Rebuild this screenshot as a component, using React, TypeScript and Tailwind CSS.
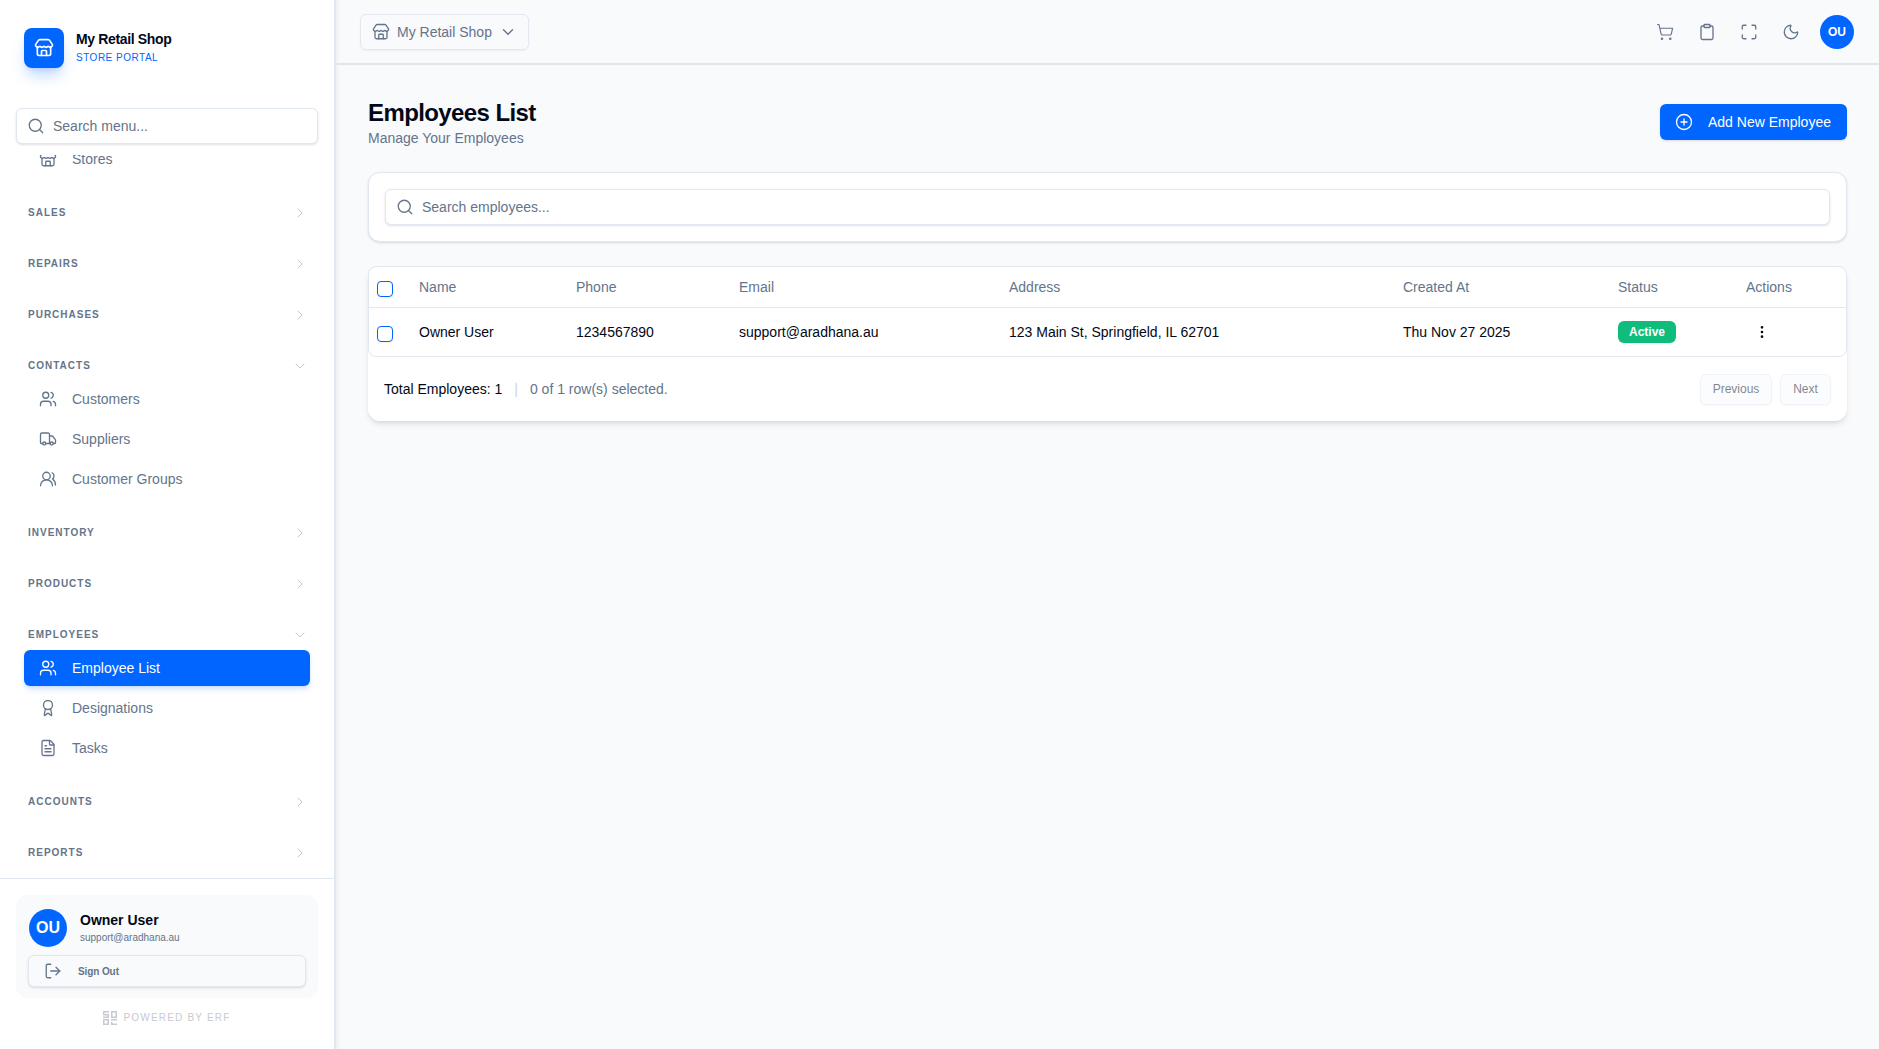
import React from "react";
import {
  Store, Search, ChevronRight, ChevronDown, Users, Truck, UsersRound, Award, FileText,
  LogOut, ShoppingCart, Clipboard, Maximize, Moon, CirclePlus, MoreVertical,
} from "lucide-react";

function Heading({ label, open }: { label: string; open?: boolean }) {
  return (
    <div className="flex h-[31px] items-center justify-between pl-1 pr-[2px]">
      <span className="text-[10px] font-bold uppercase tracking-widest text-[#64748b]">{label}</span>
      {open ? (
        <ChevronDown className="h-4 w-4 text-[#c2c8d2]" strokeWidth={1.5} />
      ) : (
        <ChevronRight className="h-4 w-4 text-[#c2c8d2]" strokeWidth={1.5} />
      )}
    </div>
  );
}

function Item({ icon: Icon, label, active }: { icon: React.ElementType; label: string; active?: boolean }) {
  return (
    <div
      className={
        active
          ? "flex h-9 items-center gap-[15px] rounded-md bg-[#0066ff] px-[15px] text-sm text-white shadow-md shadow-blue-500/20"
          : "flex h-9 items-center gap-[15px] rounded-md px-[15px] text-sm text-[#64748b]"
      }
    >
      <Icon className="h-[18px] w-[18px] shrink-0" strokeWidth={1.75} />
      <span>{label}</span>
    </div>
  );
}

function Section({ label, items }: { label: string; items?: { icon: React.ElementType; label: string; active?: boolean }[] }) {
  return (
    <div className="mb-5">
      <Heading label={label} open={!!items} />
      {items && (
        <div className="flex flex-col gap-1">
          {items.map((i) => (
            <Item key={i.label} {...i} />
          ))}
        </div>
      )}
    </div>
  );
}

function Sidebar() {
  return (
    <aside className="relative z-10 flex h-full w-[336px] shrink-0 flex-col border-r-2 border-[#e2e8f0] bg-white shadow-[2px_0_2px_rgba(226,232,240,0.5)]">
      <div className="flex h-[108px] shrink-0 items-start gap-3 px-6 pt-7">
        <div className="flex h-10 w-10 items-center justify-center rounded-lg bg-[#0066ff] text-white shadow-lg shadow-blue-500/30">
          <Store className="h-5 w-5" />
        </div>
        <div className="flex flex-col">
          <span className="text-sm font-bold leading-[22px] tracking-tight text-[#020817]">My Retail Shop</span>
          <span className="mt-px text-[10px] leading-[14px] tracking-[0.05em] text-[#0066ff]">STORE PORTAL</span>
        </div>
      </div>
      <div className="h-[47px] shrink-0 px-4">
        <div className="flex h-9 items-center gap-2 rounded-md border border-[#e2e8f0] bg-white pl-[10px] shadow-sm">
          <Search className="h-[18px] w-[18px] text-[#64748b]" strokeWidth={1.75} />
          <span className="text-sm text-[#64748b]">Search menu...</span>
        </div>
      </div>
      <nav className="min-h-0 flex-1 overflow-hidden px-6">
        <div className="-mt-[14px]">
          <div className="mb-5">
            <Item icon={Store} label="Stores" />
          </div>
          <Section label="Sales" />
          <Section label="Repairs" />
          <Section label="Purchases" />
          <Section
            label="Contacts"
            items={[
              { icon: Users, label: "Customers" },
              { icon: Truck, label: "Suppliers" },
              { icon: UsersRound, label: "Customer Groups" },
            ]}
          />
          <Section label="Inventory" />
          <Section label="Products" />
          <Section
            label="Employees"
            items={[
              { icon: Users, label: "Employee List", active: true },
              { icon: Award, label: "Designations" },
              { icon: FileText, label: "Tasks" },
            ]}
          />
          <Section label="Accounts" />
          <Section label="Reports" />
        </div>
      </nav>
      <div className="h-[171px] shrink-0 border-t border-[#e2e8f0] px-4 pt-4">
        <div className="rounded-xl bg-[#f8fafc] px-3 pb-[11px] pt-[14px]">
          <div className="flex items-start gap-[13px] pl-px">
            <div className="flex h-[38px] w-[38px] items-center justify-center rounded-full bg-[#0066ff] text-base font-bold text-white">
              OU
            </div>
            <div className="flex flex-col pt-px">
              <span className="text-sm font-bold leading-5 text-[#020817]">Owner User</span>
              <span className="text-[10px] leading-4 text-[#64748b]">support@aradhana.au</span>
            </div>
          </div>
          <div className="mt-[8px] flex h-8 items-center gap-4 rounded-md border border-[#e2e8f0] bg-[#f8fafc] pl-[15px] shadow-sm">
            <LogOut className="h-[18px] w-[18px] text-[#64748b]" strokeWidth={1.75} />
            <span className="text-[10px] font-bold tracking-[-0.01em] text-[#64748b]">Sign Out</span>
          </div>
        </div>
        <div className="mt-3 flex items-center justify-center gap-[6px]">
          <svg viewBox="0 0 14 14" className="h-[14px] w-[14px] text-[#c6cad2]" fill="currentColor">
            <path d="M0 0h6v1.500H1.500V3H6v4H0V5.500h4.500V4.500H0zM8 0h6v7H8zM9.500 1.500v4h3v-4zM0 8h6v6H0zM1.500 9.500v3h3v-3zM8 8h6v1.500H8zM8 11h1.500v1.500H14V14H8z" fillRule="evenodd" />
          </svg>
          <span className="text-[10px] tracking-[0.12em] text-[#c6cad2]">POWERED BY ERF</span>
        </div>
      </div>
    </aside>
  );
}

function Header() {
  return (
    <header className="flex h-[65px] shrink-0 items-center justify-between border-b-2 border-[#e2e4ea] bg-[#f9fafc] pl-6 pr-[25px]">
      <div className="flex h-9 w-[169px] items-center gap-[7px] rounded-md border border-[#e2e8f0] pl-[11px] text-sm text-[#64748b] shadow-xs">
        <Store className="h-[18px] w-[18px]" strokeWidth={1.75} />
        <span>My Retail Shop</span>
        <ChevronDown className="h-[18px] w-[18px]" strokeWidth={1.75} />
      </div>
      <div className="flex items-center text-[#64748b]">
        <div className="flex w-[42px] justify-center"><ShoppingCart className="h-[18px] w-[18px]" strokeWidth={1.5} /></div>
        <div className="flex w-[42px] justify-center"><Clipboard className="h-[18px] w-[18px]" strokeWidth={1.75} /></div>
        <div className="flex w-[42px] justify-center"><Maximize className="h-[18px] w-[18px]" strokeWidth={1.75} /></div>
        <div className="flex w-[42px] justify-center"><Moon className="h-[18px] w-[18px]" strokeWidth={1.75} /></div>
        <div className="ml-[8px] flex h-[34px] w-[34px] items-center justify-center rounded-full bg-[#0066ff] text-xs font-bold text-white">
          OU
        </div>
      </div>
    </header>
  );
}

const th = "h-10 px-0 text-left text-sm font-normal text-[#64748b]";
const td = "h-[49px] px-0 text-sm text-[#020817]";

function Check() {
  return <div className="h-4 w-4 translate-y-[2px] rounded border border-[#0066ff] bg-white shadow-xs" />;
}

function Main() {
  return (
    <main className="min-h-0 flex-1 overflow-hidden bg-[#f9fafc] pl-8 pr-8 pt-[27px]">
      <div className="flex items-start justify-between">
        <div className="pt-[5px]">
          <h1 className="text-2xl font-bold leading-[31px] tracking-tight text-[#020817]">Employees List</h1>
          <p className="text-sm leading-5 text-[#64748b]">Manage Your Employees</p>
        </div>
        <div className="mt-[12px] flex h-9 w-[187px] items-center gap-[15px] rounded-md bg-[#0066ff] pl-[15px] text-sm font-medium text-white shadow-sm">
          <CirclePlus className="h-[18px] w-[18px]" strokeWidth={1.75} />
          <span>Add New Employee</span>
        </div>
      </div>

      <div className="mt-[24px] rounded-xl border border-[#e2e8f0] bg-white p-4 shadow-sm">
        <div className="flex h-9 items-center gap-2 rounded-md border border-[#e2e8f0] bg-white pl-[10px] shadow-sm">
          <Search className="h-[18px] w-[18px] text-[#64748b]" strokeWidth={1.75} />
          <span className="text-sm text-[#64748b]">Search employees...</span>
        </div>
      </div>

      <div className="mt-6 rounded-xl bg-white shadow-md">
        <div className="rounded-lg border border-[#e2e8f0]">
          <table className="w-full table-fixed border-collapse">
            <colgroup>
              <col className="w-[50px]" />
              <col className="w-[157px]" />
              <col className="w-[163px]" />
              <col className="w-[270px]" />
              <col className="w-[394px]" />
              <col className="w-[215px]" />
              <col className="w-[128px]" />
              <col />
            </colgroup>
            <thead>
              <tr className="border-b border-[#e2e8f0]">
                <th className={th + " pl-2"}><Check /></th>
                <th className={th}>Name</th>
                <th className={th}>Phone</th>
                <th className={th}>Email</th>
                <th className={th}>Address</th>
                <th className={th}>Created At</th>
                <th className={th}>Status</th>
                <th className={th}>Actions</th>
              </tr>
            </thead>
            <tbody>
              <tr>
                <td className={td + " pl-2"}><Check /></td>
                <td className={td}>Owner User</td>
                <td className={td}>1234567890</td>
                <td className={td}>support@aradhana.au</td>
                <td className={td}>123 Main St, Springfield, IL 62701</td>
                <td className={td}>Thu Nov 27 2025</td>
                <td className={td}>
                  <span className="inline-flex h-[22px] w-[58px] items-center justify-center rounded-md bg-[#10bc7c] text-xs font-bold text-white shadow-xs">
                    Active
                  </span>
                </td>
                <td className={td}>
                  <MoreVertical className="ml-[8px] h-4 w-4 text-[#020817]" />
                </td>
              </tr>
            </tbody>
          </table>
        </div>
        <div className="flex h-[64px] items-center justify-between pl-4 pr-4">
          <div className="flex items-center text-sm">
            <span className="text-[#020817]">Total Employees: 1</span>
            <span className="mx-3 text-[#cbd5e1]">|</span>
            <span className="text-[#64748b]">0 of 1 row(s) selected.</span>
          </div>
          <div className="flex items-center gap-2 text-xs text-[#020817]">
            <div className="flex h-[31px] w-[72px] items-center justify-center rounded-md border border-[#e2e8f0] bg-[#f8fafc] opacity-50 shadow-xs">Previous</div>
            <div className="flex h-[31px] w-[51px] items-center justify-center rounded-md border border-[#e2e8f0] bg-[#f8fafc] opacity-50 shadow-xs">Next</div>
          </div>
        </div>
      </div>
    </main>
  );
}

export default function App() {
  return (
    <div className="flex h-screen w-full overflow-hidden bg-[#f9fafc] font-['Liberation_Sans',Arial,sans-serif]">
      <Sidebar />
      <div className="flex min-w-0 flex-1 flex-col">
        <Header />
        <Main />
      </div>
    </div>
  );
}
